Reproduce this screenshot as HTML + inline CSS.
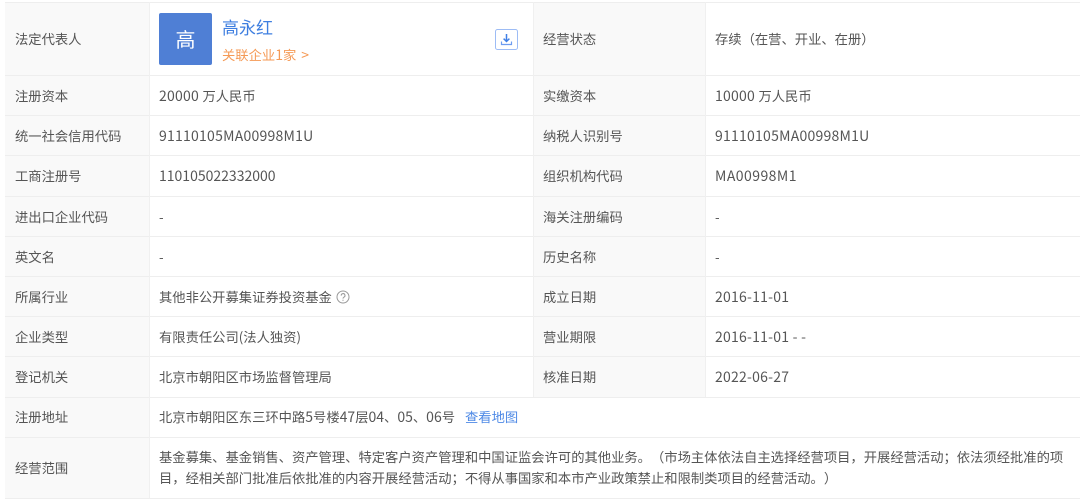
<!DOCTYPE html>
<html lang="zh"><head><meta charset="utf-8"><style>
html,body{margin:0;padding:0;background:#fff}
#p{position:relative;width:1080px;height:500px;overflow:hidden;background:#fff;font-family:"Noto Sans CJK SC","Liberation Sans",sans-serif;font-size:13.3px;color:#555;filter:blur(.3px);text-spacing-trim:space-all;font-feature-settings:"chws" 0,"palt" 0}
.c{position:absolute;background:#f9f9f9}
.h{position:absolute;left:5px;right:0;height:1px;background:#eee}
.v{position:absolute;width:1px;background:#f0f0f0}
.t{position:absolute;white-space:nowrap;line-height:20px;height:20px}
.l{font-size:14px;letter-spacing:.24px;line-height:1}
.d{font-size:14px;letter-spacing:0;line-height:1}
</style></head><body><div id="p">
<div class="c" style="left:5px;top:2px;width:144px;height:496px"></div>
<div class="c" style="left:533px;top:2px;width:172px;height:395px"></div>
<div class="h" style="top:2px"></div><div class="h" style="top:75px"></div><div class="h" style="top:115px"></div><div class="h" style="top:155px"></div><div class="h" style="top:196px"></div><div class="h" style="top:236px"></div><div class="h" style="top:276px"></div><div class="h" style="top:316px"></div><div class="h" style="top:356px"></div><div class="h" style="top:397px"></div><div class="h" style="top:437px"></div><div class="h" style="top:498px"></div>
<div class="v" style="left:149px;top:2px;height:496px"></div>
<div class="v" style="left:533px;top:2px;height:395px"></div>
<div class="v" style="left:705px;top:2px;height:395px"></div>

<div class="t" style="left:15px;top:29px">法定代表人</div>
<div style="position:absolute;left:159px;top:13px;width:53px;height:52px;background:#4f7fd5;border-radius:2px;color:#fff;font-size:20px;line-height:52px;text-align:center">高</div>
<div class="t" style="left:222px;top:17px;font-size:17px;color:#3f7fe0">高永红</div>
<div class="t" style="left:222px;top:45px;color:#f59a56">关联企业<span class="d">1</span>家<span class="l" style="margin-left:5px">&gt;</span></div>
<svg style="position:absolute;left:495px;top:29px" width="23" height="21" viewBox="0 0 23 21"><rect x=".5" y=".5" width="22" height="20" rx="2" fill="#fff" stroke="#9dbcf5"/><path d="M11.5 5v7M8.6 9.6l2.9 2.9 2.9-2.9" fill="none" stroke="#3f7fe6" stroke-width="1.5"/><path d="M6.5 12.5v3h10v-3" fill="none" stroke="#6d9cf0" stroke-width="1.2"/></svg>
<div class="t" style="left:543px;top:29px">经营状态</div>
<div class="t" style="left:715px;top:29px">存续（在营、开业、在册）</div>

<div class="t" style="left:15px;top:86px">注册资本</div>
<div class="t" style="left:159px;top:86px"><span class="l">20000 </span>万人民币</div>
<div class="t" style="left:543px;top:86px">实缴资本</div>
<div class="t" style="left:715px;top:86px"><span class="l">10000 </span>万人民币</div>

<div class="t" style="left:15px;top:126px">统一社会信用代码</div>
<div class="t" style="left:159px;top:126px"><span class="l">91110105MA00998M1U</span></div>
<div class="t" style="left:543px;top:126px">纳税人识别号</div>
<div class="t" style="left:715px;top:126px"><span class="l">91110105MA00998M1U</span></div>

<div class="t" style="left:15px;top:166px">工商注册号</div>
<div class="t" style="left:159px;top:166px"><span class="d">110105022332000</span></div>
<div class="t" style="left:543px;top:166px">组织机构代码</div>
<div class="t" style="left:715px;top:166px"><span class="l" style="letter-spacing:.45px">MA00998M1</span></div>

<div class="t" style="left:15px;top:207px">进出口企业代码</div>
<div class="t" style="left:159px;top:207px">-</div>
<div class="t" style="left:543px;top:207px">海关注册编码</div>
<div class="t" style="left:715px;top:207px">-</div>

<div class="t" style="left:15px;top:247px">英文名</div>
<div class="t" style="left:159px;top:247px">-</div>
<div class="t" style="left:543px;top:247px">历史名称</div>
<div class="t" style="left:715px;top:247px">-</div>

<div class="t" style="left:15px;top:287px">所属行业</div>
<div class="t" style="left:159px;top:287px">其他非公开募集证券投资基金</div>
<svg style="position:absolute;left:336px;top:290px" width="14" height="14" viewBox="0 0 14 14"><circle cx="7" cy="7" r="6" fill="none" stroke="#999"/><path d="M5.2 5.6a1.9 1.9 0 1 1 2.7 1.6c-.6.3-.9.7-.9 1.4" fill="none" stroke="#999"/><circle cx="7" cy="10.2" r=".6" fill="#999"/></svg>
<div class="t" style="left:543px;top:287px">成立日期</div>
<div class="t" style="left:715px;top:287px"><span class="l">2016-11-01</span></div>

<div class="t" style="left:15px;top:327px">企业类型</div>
<div class="t" style="left:159px;top:327px">有限责任公司(法人独资)</div>
<div class="t" style="left:543px;top:327px">营业期限</div>
<div class="t" style="left:715px;top:327px"><span class="l">2016-11-01 - -</span></div>

<div class="t" style="left:15px;top:367px">登记机关</div>
<div class="t" style="left:159px;top:367px">北京市朝阳区市场监督管理局</div>
<div class="t" style="left:543px;top:367px">核准日期</div>
<div class="t" style="left:715px;top:367px"><span class="l">2022-06-27</span></div>

<div class="t" style="left:15px;top:407px">注册地址</div>
<div class="t" style="left:159px;top:407px">北京市朝阳区东三环中路<span class="d">5</span>号楼<span class="d">47</span>层<span class="d">04</span>、<span class="d">05</span>、<span class="d">06</span>号</div>
<div class="t" style="left:465px;top:407px;color:#4f8ae6">查看地图</div>

<div class="t" style="left:15px;top:458px">经营范围</div>
<div class="t" style="left:159px;top:447px">基金募集、基金销售、资产管理、特定客户资产管理和中国证监会许可的其他业务。（市场主体依法自主选择经营项目，开展经营活动；依法须经批准的项</div>
<div class="t" style="left:159px;top:468px">目，经相关部门批准后依批准的内容开展经营活动；不得从事国家和本市产业政策禁止和限制类项目的经营活动。）</div>
</div></body></html>
